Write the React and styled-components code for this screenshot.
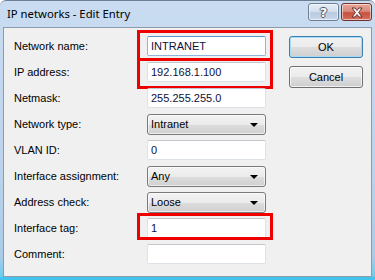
import React from 'react';
import styled, { createGlobalStyle, css } from 'styled-components';

const Global = createGlobalStyle`
	html, body {
		margin: 0;
		padding: 0;
		background: #ffffff;
	}
	* {
		box-sizing: border-box;
	}
`;

const Window = styled.div`
	width: 375px;
	height: 280px;
	display: flex;
	flex-direction: column;
	background: linear-gradient(180deg, #c9dcf1 0%, #bcd3ec 60%, #a9cbe9 92%, #5fcdee 100%);
	border-top: 1px solid #6c7e92;
	border-radius: 6px 6px 0 0;
	padding: 0 3px 3px 3px;
	box-shadow: inset 0 -3px 0 #42c4ec;
	font-family: 'Liberation Sans', Arial, sans-serif;
`;

const TitleBar = styled.div`
	height: 26px;
	display: flex;
	align-items: flex-start;
	justify-content: space-between;
	padding: 0 0 0 4px;
`;

const Title = styled.span`
	font-family: 'Noto Sans', 'Open Sans', sans-serif;
	font-size: 11.3px;
	line-height: 26px;
	color: #000;
`;

const Caption = styled.div`
	display: flex;
	gap: 2px;
	margin-top: 2px;
`;

const CaptionButton = styled.div`
	width: 31px;
	height: 18px;
	border-radius: 3px;
	display: flex;
	align-items: center;
	justify-content: center;
	${(p) =>
		p.$close
			? css`
					border: 1px solid #6e3330;
					background: linear-gradient(180deg, #e8a597 0%, #d88b7c 45%, #c8503f 55%, #d4705c 100%);
			  `
			: css`
					border: 1px solid #6f7f93;
					background: linear-gradient(180deg, #e5edf6 0%, #d4e0ed 45%, #b9cbe0 55%, #c9d8ea 100%);
			  `}
	box-shadow: inset 0 0 0 1px rgba(255, 255, 255, 0.55);
`;

const Help = styled.span`
	font-family: 'DejaVu Sans', sans-serif;
	font-weight: bold;
	font-size: 13px;
	line-height: 1;
	color: #fff;
	text-shadow: -1px 0 #4a5a6c, 1px 0 #4a5a6c, 0 -1px #4a5a6c, 0 1px #4a5a6c;
`;

const Client = styled.div`
	flex: 1;
	display: flex;
	align-items: flex-start;
	background: #f0f0f0;
	border: 1px solid #8d9bab;
	padding: 5px 0 0 10px;
`;

const Form = styled.div`
	display: grid;
	grid-template-columns: 133px 119px;
	grid-auto-rows: 26px;
	align-items: center;
`;

const Label = styled.label`
	font-size: 11px;
	color: #000;
	line-height: 13px;
`;

const Cell = styled.div`
	position: relative;
	height: 100%;
	display: flex;
	align-items: center;
`;

const Mark = styled.div`
	position: absolute;
	left: -10px;
	right: -7px;
	top: ${(p) => p.$top}px;
	bottom: ${(p) => p.$bottom}px;
	border: 3px solid #ee0000;
	pointer-events: none;
`;

const Input = styled.div`
	width: 119px;
	height: 20px;
	background: #fff;
	border: 1px solid ${(p) => (p.$focus ? '#8db7de' : '#dde2e8')};
	border-top-color: ${(p) => (p.$focus ? '#5c93c7' : '#c2c6cd')};
	border-radius: 2px;
	font-size: 11px;
	line-height: 18px;
	color: #10103a;
	padding-left: 3px;
`;

const Select = styled.div`
	width: 119px;
	height: 21px;
	border: 1px solid #7a7a7a;
	border-radius: 3px;
	background: linear-gradient(180deg, #f3f3f3 0%, #ebebeb 50%, #dddddd 51%, #d0d0d0 100%);
	box-shadow: inset 0 0 0 1px rgba(255, 255, 255, 0.6);
	display: flex;
	align-items: center;
	justify-content: space-between;
	padding: 0 7px 0 3px;
	font-size: 11px;
	color: #000;
`;

const Arrow = styled.span`
	width: 0;
	height: 0;
	border-left: 4px solid transparent;
	border-right: 4px solid transparent;
	border-top: 4px solid #000;
	margin-top: 1px;
`;

const Buttons = styled.div`
	display: flex;
	flex-direction: column;
	gap: 8px;
	margin-left: 23px;
	margin-top: 3px;
`;

const Button = styled.button`
	width: 74px;
	height: 22px;
	border-radius: 3px;
	border: 1px solid ${(p) => (p.$default ? '#3c7fb1' : '#707070')};
	background: linear-gradient(180deg, #f2f2f2 0%, #ebebeb 50%, #dddddd 51%, #cfcfcf 100%);
	box-shadow: inset 0 0 0 1px ${(p) => (p.$default ? '#a6dcf8' : 'rgba(255,255,255,0.7)')};
	font-family: 'Liberation Sans', Arial, sans-serif;
	font-size: 11px;
	color: #000;
	padding: 0;
`;

const rows = [
	{ label: 'Network name:', value: 'INTRANET', focus: true, mark: [-3, -2] },
	{ label: 'IP address:', value: '192.168.1.100', mark: [-1, -4] },
	{ label: 'Netmask:', value: '255.255.255.0' },
	{ label: 'Network type:', value: 'Intranet', select: true },
	{ label: 'VLAN ID:', value: '0' },
	{ label: 'Interface assignment:', value: 'Any', select: true },
	{ label: 'Address check:', value: 'Loose', select: true },
	{ label: 'Interface tag:', value: '1', mark: [-2, 1] },
	{ label: 'Comment:', value: '' },
];

const App = () => (
	<>
		<Global />
		<Window>
			<TitleBar>
				<Title>IP networks - Edit Entry</Title>
				<Caption>
					<CaptionButton>
						<Help>?</Help>
					</CaptionButton>
					<CaptionButton $close>
						<svg width="14" height="11" viewBox="0 0 14 11">
							<path
								d="M2 1 L5 1 L7 3.5 L9 1 L12 1 L8.6 5.5 L12 10 L9 10 L7 7.5 L5 10 L2 10 L5.4 5.5 Z"
								fill="#fff"
								stroke="#5a2420"
								strokeWidth="0.9"
								strokeLinejoin="round"
							/>
						</svg>
					</CaptionButton>
				</Caption>
			</TitleBar>
			<Client>
				<Form>
					{rows.map((r) => (
						<React.Fragment key={r.label}>
							<Label>{r.label}</Label>
							<Cell>
								{r.select ? (
									<Select>
										{r.value}
										<Arrow />
									</Select>
								) : (
									<Input $focus={r.focus}>{r.value}</Input>
								)}
								{r.mark && <Mark $top={r.mark[0]} $bottom={r.mark[1]} />}
							</Cell>
						</React.Fragment>
					))}
				</Form>
				<Buttons>
					<Button $default>OK</Button>
					<Button>Cancel</Button>
				</Buttons>
			</Client>
		</Window>
	</>
);

export default App;
